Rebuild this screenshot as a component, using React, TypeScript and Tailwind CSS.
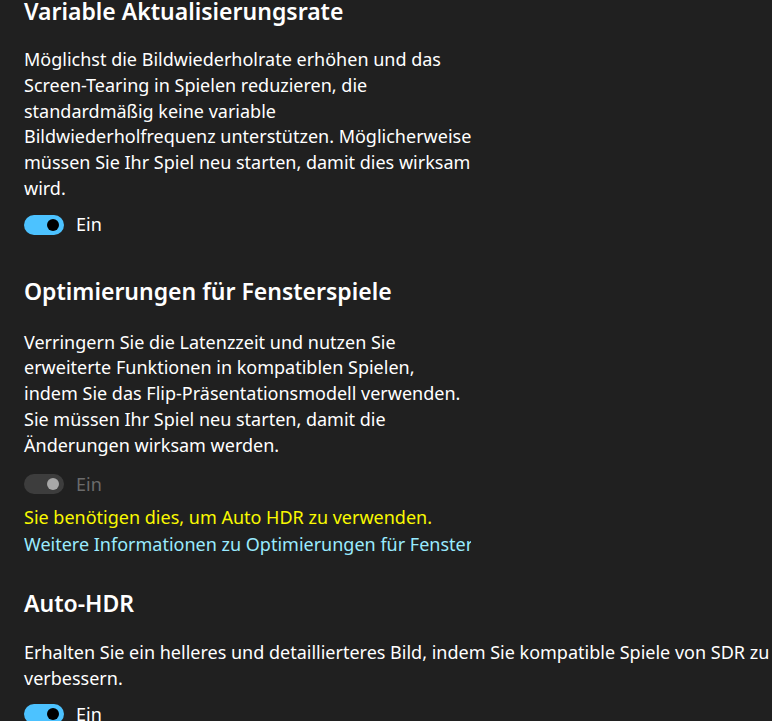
import React from "react";

function Toggle({ disabled = false }: { disabled?: boolean }) {
  return (
    <div className="flex items-center gap-3">
      {disabled ? (
        <div className="flex h-5 w-10 items-center justify-end rounded-full bg-[#3d3d3d] pr-[5px]">
          <div className="h-3 w-3 rounded-full bg-[#a8a8a8]" />
        </div>
      ) : (
        <div className="flex h-5 w-10 items-center justify-end rounded-full bg-[#4cc2ff] pr-[5px]">
          <div className="h-3 w-3 rounded-full bg-black" />
        </div>
      )}
      <span className={disabled ? "text-[#6b6b6b]" : "text-white"}>Ein</span>
    </div>
  );
}

export default function App() {
  return (
    <main
      className="h-[721px] w-[772px] overflow-hidden bg-[#202020] pl-6 text-[18px] leading-[25.8px] text-white"
      style={{ fontFamily: '"Noto Sans", "Open Sans", sans-serif' }}
    >
      <section className="-mt-[5px]">
        <h2 className="text-[23px] font-semibold leading-8">
          Variable Aktualisierungsrate
        </h2>
        <p className="mt-[20px] w-[448px]">
          Möglichst die Bildwiederholrate erhöhen und das Screen-Tearing in
          Spielen reduzieren, die standardmäßig keine variable
          Bildwiederholfrequenz unterstützen. Möglicherweise müssen Sie Ihr
          Spiel neu starten, damit dies wirksam wird.
        </p>
        <div className="mt-[10px]">
          <Toggle />
        </div>
      </section>

      <section className="mt-[37px]">
        <h2 className="text-[23px] font-semibold leading-8">
          Optimierungen für Fensterspiele
        </h2>
        <p className="mt-[23px] w-[448px]">
          Verringern Sie die Latenzzeit und nutzen Sie erweiterte Funktionen in
          kompatiblen Spielen, indem Sie das Flip-Präsentationsmodell verwenden.
          Sie müssen Ihr Spiel neu starten, damit die Änderungen wirksam werden.
        </p>
        <div className="mt-[13px]">
          <Toggle disabled />
        </div>
        <p className="mt-[8px] text-[#f9f900]">
          Sie benötigen dies, um Auto HDR zu verwenden.
        </p>
        <div className="mt-[1px] w-[447px] overflow-hidden whitespace-nowrap">
          <a className="text-[#99ebff]">
            Weitere Informationen zu Optimierungen für Fensterspiele
          </a>
        </div>
      </section>

      <section className="mt-[29px]">
        <h2 className="text-[23px] font-semibold leading-8">Auto-HDR</h2>
        <p className="mt-[21px] w-[820px]">
          Erhalten Sie ein helleres und detaillierteres Bild, indem Sie
          kompatible Spiele von SDR zu HDR verbessern.
        </p>
        <div className="mt-[10px]">
          <Toggle />
        </div>
      </section>
    </main>
  );
}
